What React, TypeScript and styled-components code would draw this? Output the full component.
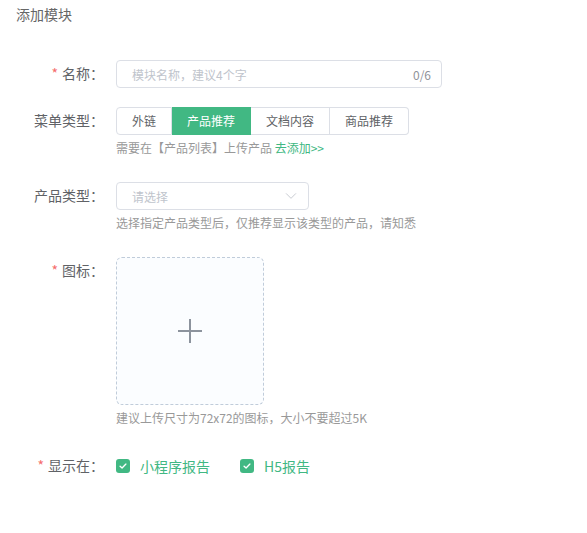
import styled, { createGlobalStyle } from 'styled-components'

const GREEN = '#41b883'

const menuTypes = ['外链', '产品推荐', '文档内容', '商品推荐']
const displayTargets = ['小程序报告', 'H5报告']

const GlobalStyle = createGlobalStyle`
  body {
    margin: 0;
    background: #fff;
    font-family: "Noto Sans CJK SC", "Liberation Sans", sans-serif;
  }
`

function ChevronDown() {
  return (
    <svg width="14" height="14" viewBox="0 0 24 24" fill="none">
      <path d="M4 8l8 8 8-8" stroke="#c0c4cc" strokeWidth="1.5" strokeLinecap="round" strokeLinejoin="round" />
    </svg>
  )
}

function Check() {
  return (
    <svg width="10" height="10" viewBox="0 0 12 12" fill="none">
      <path d="M2.5 6.2l2.4 2.3 4.6-4.8" stroke="#fff" strokeWidth="1.6" strokeLinecap="round" strokeLinejoin="round" />
    </svg>
  )
}

function App() {
  return (
    <Page>
      <GlobalStyle />
      <Title>添加模块</Title>
      <Form>
        <FormItem>
          <Label required>名称：</Label>
          <Control>
            <InputBox>
              <Placeholder>模块名称，建议4个字</Placeholder>
              <Counter>0/6</Counter>
            </InputBox>
          </Control>
        </FormItem>

        <FormItem>
          <Label>菜单类型：</Label>
          <Control>
            <RadioGroup>
              {menuTypes.map(t => (
                <RadioButton key={t} active={t === '产品推荐'}>
                  {t}
                </RadioButton>
              ))}
            </RadioGroup>
            <Hint>
              需要在【产品列表】上传产品 <HintLink>去添加&gt;&gt;</HintLink>
            </Hint>
          </Control>
        </FormItem>

        <FormItem>
          <Label>产品类型：</Label>
          <Control>
            <SelectBox>
              <Placeholder>请选择</Placeholder>
              <ChevronDown />
            </SelectBox>
            <Hint>选择指定产品类型后，仅推荐显示该类型的产品，请知悉</Hint>
          </Control>
        </FormItem>

        <FormItem>
          <Label required>图标：</Label>
          <Control>
            <Uploader>
              <Plus />
            </Uploader>
            <Hint>建议上传尺寸为72x72的图标，大小不要超过5K</Hint>
          </Control>
        </FormItem>

        <FormItem>
          <Label required>显示在：</Label>
          <Control>
            <CheckGroup>
              {displayTargets.map(t => (
                <CheckItem key={t}>
                  <CheckBox>
                    <Check />
                  </CheckBox>
                  {t}
                </CheckItem>
              ))}
            </CheckGroup>
          </Control>
        </FormItem>
      </Form>
    </Page>
  )
}

export default App

const Page = styled.div`
  padding: 4px 16px;
  height: 525px;
`

const Title = styled.div`
  font-size: 14px;
  line-height: 20px;
  color: #666;
`

const Form = styled.div`
  margin-top: 36px;
`

const FormItem = styled.div`
  display: flex;
  align-items: flex-start;
  margin-bottom: 19px;
`

const Label = styled.div<{ required?: boolean }>`
  width: 88px;
  flex-shrink: 0;
  padding-right: 12px;
  text-align: right;
  font-size: 14px;
  line-height: 27px;
  color: #606266;
  &::before {
    content: ${p => (p.required ? "'*'" : "''")};
    color: #f56c6c;
    margin-right: 4px;
  }
`

const Control = styled.div`
  display: flex;
  flex-direction: column;
  align-items: flex-start;
`

const InputBox = styled.div`
  box-sizing: border-box;
  width: 326px;
  height: 28px;
  border: 1px solid #dcdfe6;
  border-radius: 4px;
  padding: 0 10px 0 15px;
  display: flex;
  align-items: center;
  justify-content: space-between;
`

const Placeholder = styled.span`
  font-size: 12px;
  color: #c0c4cc;
`

const Counter = styled.span`
  font-size: 12px;
  color: #909399;
`

const RadioGroup = styled.div`
  display: flex;
`

const RadioButton = styled.div<{ active?: boolean }>`
  box-sizing: border-box;
  height: 28px;
  line-height: 26px;
  padding: 0 15px;
  font-size: 12px;
  border: 1px solid ${p => (p.active ? GREEN : '#dcdfe6')};
  border-left-width: 0;
  background: ${p => (p.active ? GREEN : '#fff')};
  color: ${p => (p.active ? '#fff' : '#606266')};
  &:first-child {
    border-left-width: 1px;
    border-radius: 4px 0 0 4px;
  }
  &:last-child {
    border-radius: 0 4px 4px 0;
  }
`

const Hint = styled.div`
  margin-top: 4px;
  margin-bottom: 6px;
  font-size: 12px;
  line-height: 18px;
  color: #999;
`

const HintLink = styled.span`
  color: ${GREEN};
`

const SelectBox = styled(InputBox)`
  width: 193px;
  padding-right: 10px;
`

const Uploader = styled.div`
  box-sizing: border-box;
  width: 148px;
  height: 148px;
  border: 1px dashed #c0ccda;
  border-radius: 6px;
  background: #fbfdff;
  display: flex;
  align-items: center;
  justify-content: center;
`

const Plus = styled.div`
  position: relative;
  width: 24px;
  height: 24px;
  &::before,
  &::after {
    content: '';
    position: absolute;
    background: #8c939d;
  }
  &::before {
    left: 0;
    top: 11px;
    width: 24px;
    height: 2px;
  }
  &::after {
    left: 11px;
    top: 0;
    width: 2px;
    height: 24px;
  }
`

const CheckGroup = styled.div`
  display: flex;
  gap: 30px;
  height: 28px;
  align-items: center;
`

const CheckItem = styled.div`
  display: flex;
  align-items: center;
  gap: 10px;
  font-size: 14px;
  color: ${GREEN};
`

const CheckBox = styled.span`
  width: 14px;
  height: 14px;
  border-radius: 3px;
  background: ${GREEN};
  display: flex;
  align-items: center;
  justify-content: center;
`
